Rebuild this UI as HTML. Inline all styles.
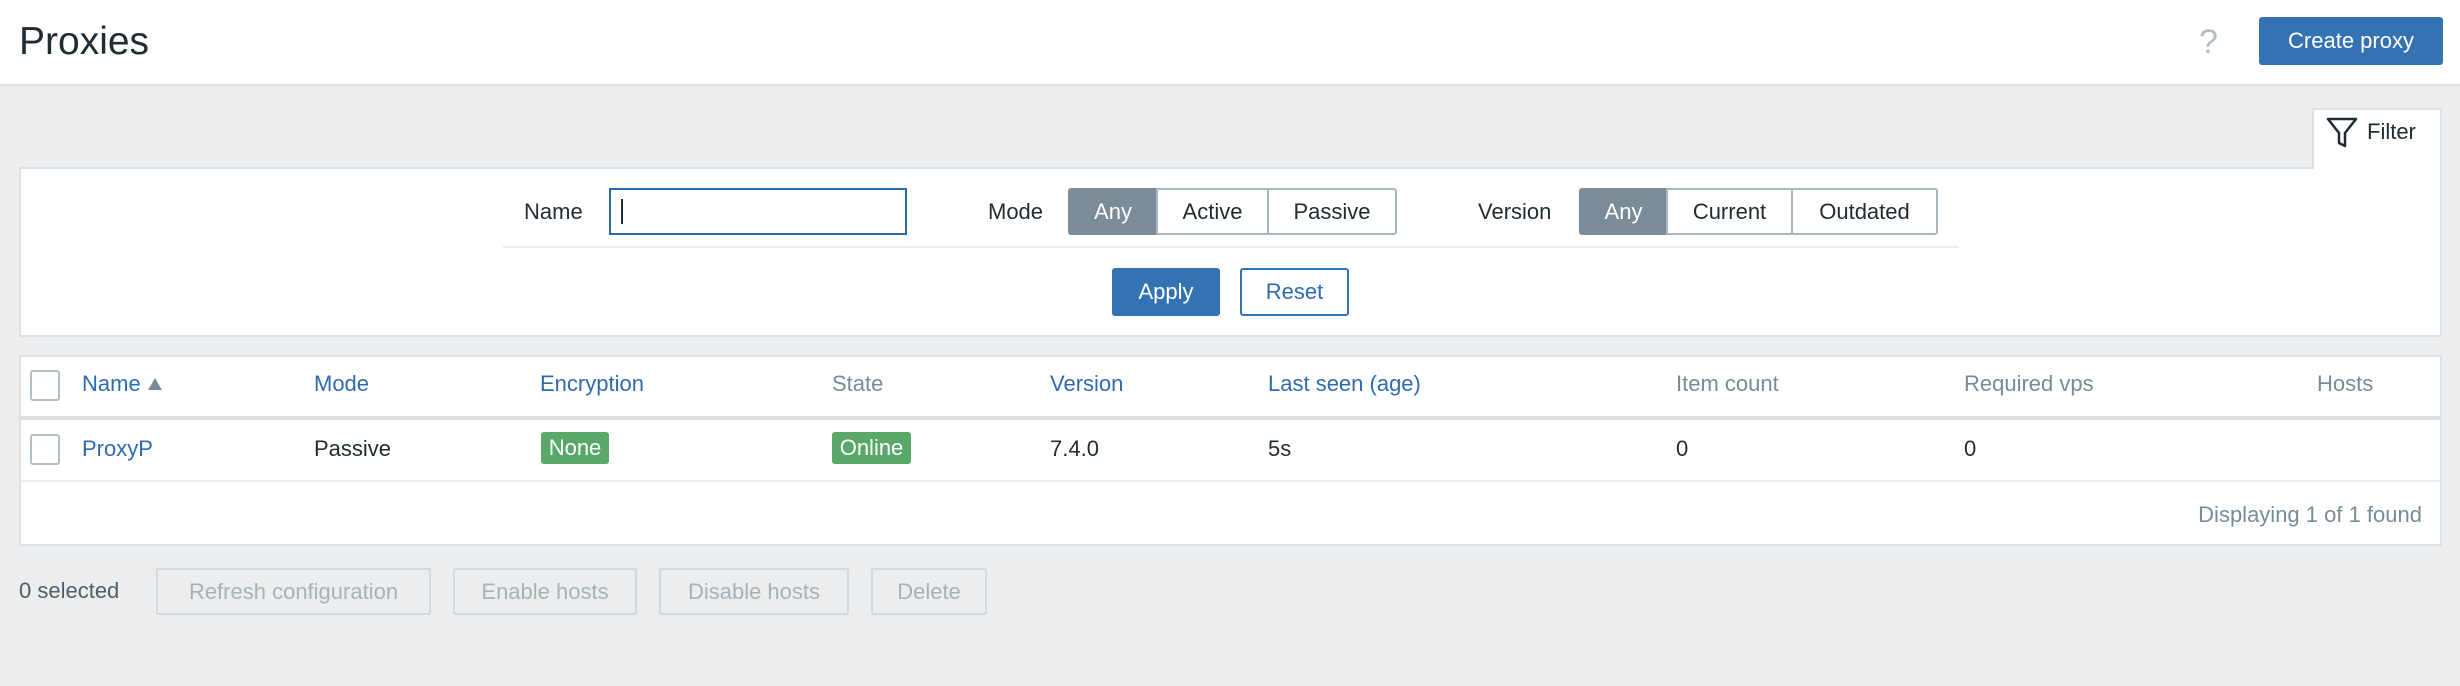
<!DOCTYPE html>
<html><head><meta charset="utf-8"><style>
*{box-sizing:border-box;margin:0;padding:0}
body{width:2460px;height:686px;background:#ebedef;font-family:"Liberation Sans",Arial,sans-serif;font-size:22px;color:#1f2c33;position:relative;overflow:hidden}
.a{position:absolute}
.hdr{left:0;top:0;width:2460px;height:86px;background:#fff;border-bottom:2px solid #dde1e4}
.t{display:flex;align-items:center;position:absolute;white-space:nowrap}
.btn{background:#3473b3;color:#fff;border-radius:3px;justify-content:center}
.seg{border:2px solid #a9b6be;justify-content:center;color:#1f2c33;background:#fff}
.lnk{color:#2f6bb0}
.gr{color:#768d99}
.badge{background:#59a869;color:#fff;border-radius:3px;justify-content:center}
.dis{border:2px solid #d3d8dc;background:#ebedef;color:#a6b2b9;justify-content:center;border-radius:2px}
.cb{border:2px solid #b4bec4;border-radius:3px;background:#fff;width:30px;height:31px}
</style></head><body>
<div class="a hdr"></div>
<div class="t" style="left:19px;top:20px;height:44px;font-size:39px;color:#1f2c33">Proxies</div>
<div class="t" style="left:2199px;top:22px;height:40px;font-size:34px;color:#b3bcc2">?</div>
<div class="t btn" style="left:2259px;top:17px;width:184px;height:48px;">Create proxy</div>

<!-- filter tab -->
<div class="a" style="left:2312px;top:108px;width:130px;height:62px;background:#fff;border:2px solid #dde1e4;border-bottom:none"></div>
<svg class="a" style="left:2325px;top:115px" width="34" height="34" viewBox="0 0 34 34"><path d="M3 4 H31 L20 18 V31 L14 28 V18 Z" fill="none" stroke="#1f2c33" stroke-width="2.5" stroke-linejoin="round"/></svg>
<div class="t" style="left:2367px;top:116px;height:32px">Filter</div>

<!-- filter panel -->
<div class="a" style="left:19px;top:167px;width:2423px;height:170px;background:#fff;border:2px solid #dde1e4"></div>
<div class="a" style="left:2314px;top:165px;width:126px;height:6px;background:#fff"></div>
<div class="t" style="left:524px;top:188px;height:47px">Name</div>
<div class="a" style="left:609px;top:188px;width:298px;height:47px;border:2px solid #2b6aa8;background:#fff"></div>
<div class="a" style="left:621px;top:199px;width:2px;height:25px;background:#1f2c33"></div>
<div class="t" style="left:988px;top:188px;height:47px">Mode</div>
<div class="t seg" style="left:1068px;top:188px;width:90px;height:47px;background:#7b8c98;border-color:#7b8c98;color:#fff;border-radius:3px 0 0 3px">Any</div>
<div class="t seg" style="left:1156px;top:188px;width:113px;height:47px">Active</div>
<div class="t seg" style="left:1267px;top:188px;width:130px;height:47px;border-radius:0 3px 3px 0">Passive</div>
<div class="t" style="left:1478px;top:188px;height:47px">Version</div>
<div class="t seg" style="left:1579px;top:188px;width:89px;height:47px;background:#7b8c98;border-color:#7b8c98;color:#fff;border-radius:3px 0 0 3px">Any</div>
<div class="t seg" style="left:1666px;top:188px;width:127px;height:47px">Current</div>
<div class="t seg" style="left:1791px;top:188px;width:147px;height:47px;border-radius:0 3px 3px 0">Outdated</div>
<div class="a" style="left:503px;top:246px;width:1456px;height:2px;background:#ebedef"></div>
<div class="t btn" style="left:1112px;top:268px;width:108px;height:48px">Apply</div>
<div class="t" style="left:1240px;top:268px;width:109px;height:48px;border:2px solid #3473b3;border-radius:3px;color:#2f6bb0;justify-content:center;background:#fff">Reset</div>

<!-- table -->
<div class="a" style="left:19px;top:355px;width:2423px;height:191px;background:#fff;border:2px solid #dde1e4"></div>
<div class="a" style="left:21px;top:416px;width:2419px;height:4px;background:#dde1e4"></div>
<div class="a" style="left:21px;top:480px;width:2419px;height:2px;background:#ebedef"></div>
<div class="a cb" style="left:30px;top:370px"></div>
<div class="t lnk" style="left:82px;top:366px;height:36px">Name<svg width="18" height="14" style="margin-left:6px"><path d="M1 13 L8 1 L15 13Z" fill="#768d99"/></svg></div>
<div class="t lnk" style="left:314px;top:366px;height:36px">Mode</div>
<div class="t lnk" style="left:540px;top:366px;height:36px">Encryption</div>
<div class="t gr" style="left:832px;top:366px;height:36px">State</div>
<div class="t lnk" style="left:1050px;top:366px;height:36px">Version</div>
<div class="t lnk" style="left:1268px;top:366px;height:36px">Last seen (age)</div>
<div class="t gr" style="left:1676px;top:366px;height:36px">Item count</div>
<div class="t gr" style="left:1964px;top:366px;height:36px">Required vps</div>
<div class="t gr" style="left:2317px;top:366px;height:36px">Hosts</div>

<div class="a cb" style="left:30px;top:434px"></div>
<div class="t lnk" style="left:82px;top:431px;height:36px">ProxyP</div>
<div class="t" style="left:314px;top:431px;height:36px">Passive</div>
<div class="t badge" style="left:541px;top:432px;width:68px;height:32px">None</div>
<div class="t badge" style="left:832px;top:432px;width:79px;height:32px">Online</div>
<div class="t" style="left:1050px;top:431px;height:36px">7.4.0</div>
<div class="t" style="left:1268px;top:431px;height:36px">5s</div>
<div class="t" style="left:1676px;top:431px;height:36px">0</div>
<div class="t" style="left:1964px;top:431px;height:36px">0</div>
<div class="t gr" style="right:38px;top:497px;height:36px">Displaying 1 of 1 found</div>

<!-- bottom -->
<div class="t" style="left:19px;top:573px;height:36px;color:#4f5f68">0 selected</div>
<div class="t dis" style="left:156px;top:568px;width:275px;height:47px">Refresh configuration</div>
<div class="t dis" style="left:453px;top:568px;width:184px;height:47px">Enable hosts</div>
<div class="t dis" style="left:659px;top:568px;width:190px;height:47px">Disable hosts</div>
<div class="t dis" style="left:871px;top:568px;width:116px;height:47px">Delete</div>
</body></html>
